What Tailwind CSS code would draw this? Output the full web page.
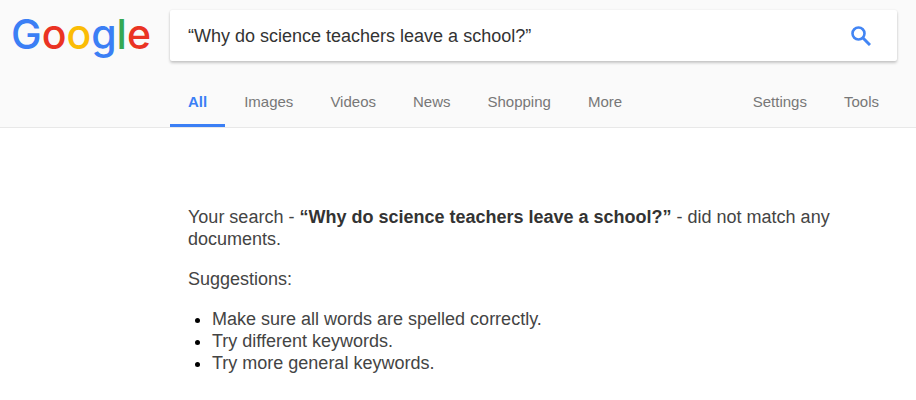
<!DOCTYPE html>
<html lang="en">
  <head>
    <meta charset="UTF-8" />
    <title>Google Search</title>
    <script src="https://cdn.jsdelivr.net/npm/@tailwindcss/browser@4"></script>
  </head>
  <body class="min-h-screen bg-white font-['Liberation_Sans',Arial,sans-serif] text-lg leading-[22px] text-[#444]">
    <!-- Search header -->
    <header class="border-b border-[#e8e8e8] bg-[#fafafa] pt-[10px] pr-[19px]">
      <div class="flex items-center">
        <a href="#" aria-label="Google" class="w-[170px] shrink-0 pb-1 pl-[11px] font-['Inter',sans-serif] text-[41px] leading-[44px] font-medium">
          <span class="text-[#3b7ff5]">G</span><span class="text-[#ea3323]">o</span><span class="text-[#fbbc05]">o</span><span class="text-[#3b7ff5]">g</span><span class="text-[#34a853]">l</span><span class="text-[#ea3323]">e</span>
        </a>
        <form class="flex h-[51px] flex-1 items-center rounded-xs bg-white pr-[26px] pl-[18px] shadow-[0_2px_3px_rgba(0,0,0,0.2),0_0_2px_rgba(0,0,0,0.08)]">
          <input type="text" aria-label="Search" value="“Why do science teachers leave a school?”" class="min-w-0 flex-1 text-[#333] outline-none" />
          <button type="submit" aria-label="Search">
            <svg class="size-5" viewBox="0 0 20 20" fill="none" stroke="#4285f4">
              <circle cx="7.5" cy="7.5" r="6" stroke-width="2.6" />
              <path d="M12 12l7 7" stroke-width="3" />
            </svg>
          </button>
        </form>
      </div>

      <nav class="mt-[17px] flex gap-px pl-[170px] text-[15px] text-[#777]">
        <a href="#" class="border-b-3 border-[#3b7ff5] px-[18px] pt-[13px] pb-[11px] font-bold text-[#3b7ff5]">All</a>
        <a href="#" class="px-[18px] pt-[13px]">Images</a>
        <a href="#" class="px-[18px] pt-[13px]">Videos</a>
        <a href="#" class="px-[18px] pt-[13px]">News</a>
        <a href="#" class="px-[18px] pt-[13px]">Shopping</a>
        <a href="#" class="px-[18px] pt-[13px]">More</a>
        <a href="#" class="ml-auto px-[18px] pt-[13px]">Settings</a>
        <a href="#" class="px-[18px] pt-[13px]">Tools</a>
      </nav>
    </header>

    <!-- No results message -->
    <main class="max-w-[890px] pt-[78px] pr-5 pl-[188px]">
      <p>Your search - <b class="text-[#333]">“Why do science teachers leave a school?”</b> - did not match any documents.</p>
      <p class="mt-[18px]">Suggestions:</p>
      <ul class="mt-[18px] list-disc pl-6 marker:text-black">
        <li>Make sure all words are spelled correctly.</li>
        <li>Try different keywords.</li>
        <li>Try more general keywords.</li>
      </ul>
    </main>
  </body>
</html>
